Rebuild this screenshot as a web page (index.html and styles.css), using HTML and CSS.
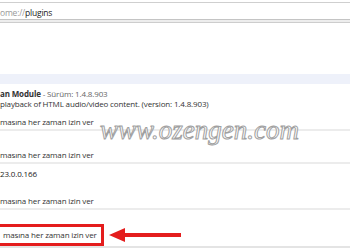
FILE: index.html
```html
<!DOCTYPE html>
<html>
<head>
<meta charset="utf-8">
<link rel="stylesheet" href="styles.css">
</head>
<body>
<div class="topbar">
  <div class="addr"><span class="scheme">ome://</span><span class="host">plugins</span></div>
  <div class="addr-shadow"></div>
</div>
<div class="blank"></div>
<div class="band"></div>
<div class="plugins">
  <div class="row name-row"><b>an Module</b> <span class="muted">- Sürüm: 1.4.8.903</span></div>
  <div class="row">playback of HTML audio/video content. (version: 1.4.8.903)</div>
  <div class="row check-row">masına her zaman izin ver</div>
  <div class="row check-row second">masına her zaman izin ver</div>
  <div class="row version">23.0.0.166</div>
  <div class="row check-row third">masına her zaman izin ver</div>
  <div class="highlight-wrap">
    <div class="highlight">masına her zaman izin ver</div>
    <svg class="arrow" width="72" height="16" viewBox="0 0 72 16">
      <polygon points="0,8 16,1 16,6 72,6 72,10 16,10 16,15" fill="#e41d1d"/>
    </svg>
  </div>
  <div class="watermark">www.ozengen.com</div>
</div>
</body>
</html>
```
FILE: styles.css
```css
html, body {
  margin: 0;
  padding: 0;
  background: #fff;
}
body {
  width: 350px;
  height: 250px;
  overflow: hidden;
  font-family: "Open Sans", "DejaVu Sans", sans-serif;
  font-size: 8px;
  color: #333;
  position: relative;
}
.topbar {
  padding-top: 2px;
}
.addr {
  border-top: 1px solid #cfcfcf;
  height: 16px;
  line-height: 19px;
  font-size: 8.5px;
  letter-spacing: -0.2px;
  border-bottom: 1px solid #c4c4c4;
}
.scheme { color: #9a9a9a; }
.host { color: #222; }
.addr-shadow {
  height: 2px;
  background: #ededed;
  border-bottom: 1px solid #cdcdcd;
}
.blank {
  height: 51px;
}
.band {
  height: 10px;
  background: #eef1fa;
}
.plugins {
  padding-top: 5px;
}
.row {
  line-height: 10px;
  white-space: nowrap;
  letter-spacing: -0.15px;
}
.name-row b {
  color: #333;
}
.muted { color: #666; }
.check-row {
  margin-top: 8px;
  padding-bottom: 2px;
  border-bottom: 2px solid #ececec;
}
.check-row.second {
  margin-top: 19px;
}
.version {
  margin-top: 5px;
  color: #222;
}
.check-row.third {
  margin-top: 17px;
}
.highlight-wrap {
  display: flex;
  align-items: center;
  margin-top: 14px;
  border-bottom: 2px solid #e4e4e4;
}
.highlight {
  margin-left: -4px;
  width: 98px;
  height: 16px;
  line-height: 16px;
  padding-left: 4px;
  border: 3px solid #e41d1d;
  white-space: nowrap;
  letter-spacing: -0.15px;
}
.arrow {
  margin-left: 5px;
}
.watermark {
  position: absolute;
  left: 100px;
  top: 115px;
  font-family: "Liberation Serif", serif;
  font-style: italic;
  font-size: 27px;
  color: #fff;
  -webkit-text-stroke: 1px #a0a0a0;
  white-space: nowrap;
}
```
